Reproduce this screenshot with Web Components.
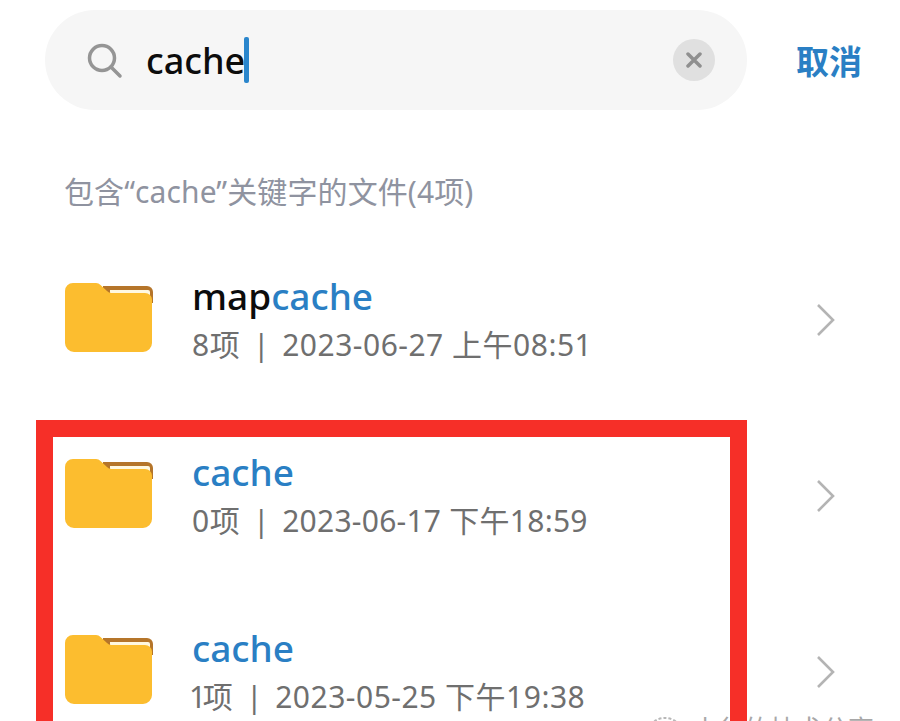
<!DOCTYPE html>
<html>
<head>
<meta charset="utf-8">
<style>
  html, body { margin: 0; height: 100%; background: #fff; overflow: hidden; }
  body { font-family: "Noto Sans", "Noto Sans CJK SC", sans-serif; }
</style>
</head>
<body>
<file-page></file-page>
<script>
const FOLDER = `<svg width="88" height="70" viewBox="0 0 88 70" style="display:block">
  <path d="M38 3H82a6 6 0 0 1 6 6V20H38Z" fill="#b5752a"/>
  <path d="M45 7H83a2 2 0 0 1 2 2V14H45Z" fill="#fff8e0"/>
  <path d="M8 0H31a6 6 0 0 1 4.500 2l6.500 6a6 6 0 0 0 4.500 2H80a7 7 0 0 1 7 6.500V60a9 9 0 0 1-9 9H9a9 9 0 0 1-9-9V8a8 8 0 0 1 8-8Z" fill="#fcbd2f"/>
</svg>`;

const CHEVRON = `<svg width="20" height="34" viewBox="0 0 20 34" style="display:block">
  <path d="M2 2L17 17L2 32" fill="none" stroke="#b4b4b4" stroke-width="2.600"/>
</svg>`;

class SearchBar extends HTMLElement {
  constructor() {
    super();
    this.attachShadow({ mode: 'open' });
    this.shadowRoot.innerHTML = `
      <style>
        :host { display: flex; align-items: center; margin-left: 45px; padding-top: 10px; }
        .box {
          width: 702px; height: 100px; box-sizing: border-box;
          background: #f6f6f6; border-radius: 50px;
          display: flex; align-items: center; padding-left: 42px;
        }
        .glass { width: 36px; height: 36px; margin-top: 2px; }
        .text { margin-left: 23px; margin-top: 2px; font-size: 36px; font-weight: 500; color: #0c0c0c; line-height: 50px; }
        .caret { width: 5px; height: 46px; background: #2a86cc; border-radius: 2px; margin-left: -1px; }
        .clear {
          width: 42px; height: 42px; border-radius: 50%; background: #e0e0e0;
          margin-left: auto; margin-right: 32px;
          display: flex; align-items: center; justify-content: center;
        }
        .cancel { margin-left: 49px; font-size: 33px; font-weight: 700; color: #2a7fc4; font-family: "Noto Sans CJK SC", sans-serif; }
      </style>
      <div class="box">
        <svg class="glass" viewBox="0 0 36 36"><circle cx="15" cy="15" r="12.500" fill="none" stroke="#959595" stroke-width="3.500"/><path d="M24 24L33 33" stroke="#959595" stroke-width="3.500" stroke-linecap="round"/></svg>
        <span class="text">cache</span><span class="caret"></span>
        <span class="clear"><svg width="16" height="16" viewBox="0 0 16 16"><path d="M2 2L14 14M14 2L2 14" stroke="#8f8f8f" stroke-width="3.500" stroke-linecap="round"/></svg></span>
      </div>
      <span class="cancel">取消</span>
    `;
  }
}

class SectionLabel extends HTMLElement {
  constructor() {
    super();
    this.attachShadow({ mode: 'open' });
    this.shadowRoot.innerHTML = `
      <style>
        :host { display: block; margin: 60px 0 0 64px; font-size: 30px; letter-spacing: 0.1px; line-height: 44px; color: #8f93a0; }
      </style>
      <slot></slot>
    `;
  }
}

class FolderRow extends HTMLElement {
  constructor() {
    super();
    this.attachShadow({ mode: 'open' });
    this.shadowRoot.innerHTML = `
      <style>
        :host { display: flex; align-items: center; height: 176px; padding-left: 65px; }
        .icon { width: 88px; height: 70px; flex: none; margin-top: -6px; }
        .info { margin-left: 39px; margin-top: -3px; }
        .name { font-size: 37px; font-weight: 500; line-height: 48px; color: #0c0c0c; }
        .meta { margin-top: 2px; font-size: 30px; letter-spacing: 0.5px; line-height: 46px; color: #6f6f6f; white-space: nowrap; display: flex; }
        .sep { width: 42px; text-align: center; letter-spacing: 0; }
        .arrow { margin-left: auto; margin-right: 64px; height: 34px; margin-top: -3px; }
      </style>
      <div class="icon">${FOLDER}</div>
      <div class="info">
        <div class="name"><slot name="name"></slot></div>
        <div class="meta"><slot name="count"></slot><span class="sep">|</span><slot name="date"></slot></div>
      </div>
      <div class="arrow">${CHEVRON}</div>
    `;
  }
}

class HighlightBox extends HTMLElement {
  constructor() {
    super();
    this.attachShadow({ mode: 'open' });
    this.shadowRoot.innerHTML = `
      <style>
        :host {
          position: absolute; left: 36px; top: 420px; width: 711px; height: 340px;
          box-sizing: border-box; border: 17px solid #f62f28; pointer-events: none;
        }
      </style>
    `;
  }
}

class WaterMark extends HTMLElement {
  constructor() {
    super();
    this.attachShadow({ mode: 'open' });
    this.shadowRoot.innerHTML = `
      <style>
        :host {
          position: absolute; left: 650px; top: 712px; white-space: nowrap;
          display: flex; align-items: flex-start; gap: 12px;
          font-size: 26px; line-height: 32px; color: #a8a8a8;
          font-family: "Noto Sans CJK SC", sans-serif;
        }
        svg { margin-top: 3px; }
      </style>
      <svg width="30" height="26" viewBox="0 0 30 26"><ellipse cx="15" cy="13" rx="14" ry="10" fill="none" stroke="#b8b8b8" stroke-width="2" stroke-dasharray="3 2"/></svg>
      <slot></slot>
    `;
  }
}

class FilePage extends HTMLElement {
  constructor() {
    super();
    this.attachShadow({ mode: 'open' });
    this.shadowRoot.innerHTML = `
      <style>
        :host { display: block; position: relative; width: 900px; height: 721px; overflow: hidden; }
        .rows { margin-top: 19px; }
        .hit { color: #2a7fc4; }
        .one { margin-left: -3px; letter-spacing: -3.500px; }
      </style>
      <search-bar></search-bar>
      <section-label>包含“cache”关键字的文件(4项)</section-label>
      <div class="rows">
        <folder-row><span slot="name">map<span class="hit">cache</span></span><span slot="count">8项</span><span slot="date">2023-06-27 上午08:51</span></folder-row>
        <folder-row><span slot="name" class="hit">cache</span><span slot="count">0项</span><span slot="date" style="letter-spacing:0.25px">2023-06-17 下午18:59</span></folder-row>
        <folder-row><span slot="name" class="hit">cache</span><span slot="count"><span class="one">1</span>项</span><span slot="date">2023-05-25 下午19:38</span></folder-row>
      </div>
      <water-mark>小华的技术分享</water-mark>
      <highlight-box></highlight-box>
    `;
  }
}

customElements.define('search-bar', SearchBar);
customElements.define('section-label', SectionLabel);
customElements.define('folder-row', FolderRow);
customElements.define('highlight-box', HighlightBox);
customElements.define('water-mark', WaterMark);
customElements.define('file-page', FilePage);
</script>
</body>
</html>
